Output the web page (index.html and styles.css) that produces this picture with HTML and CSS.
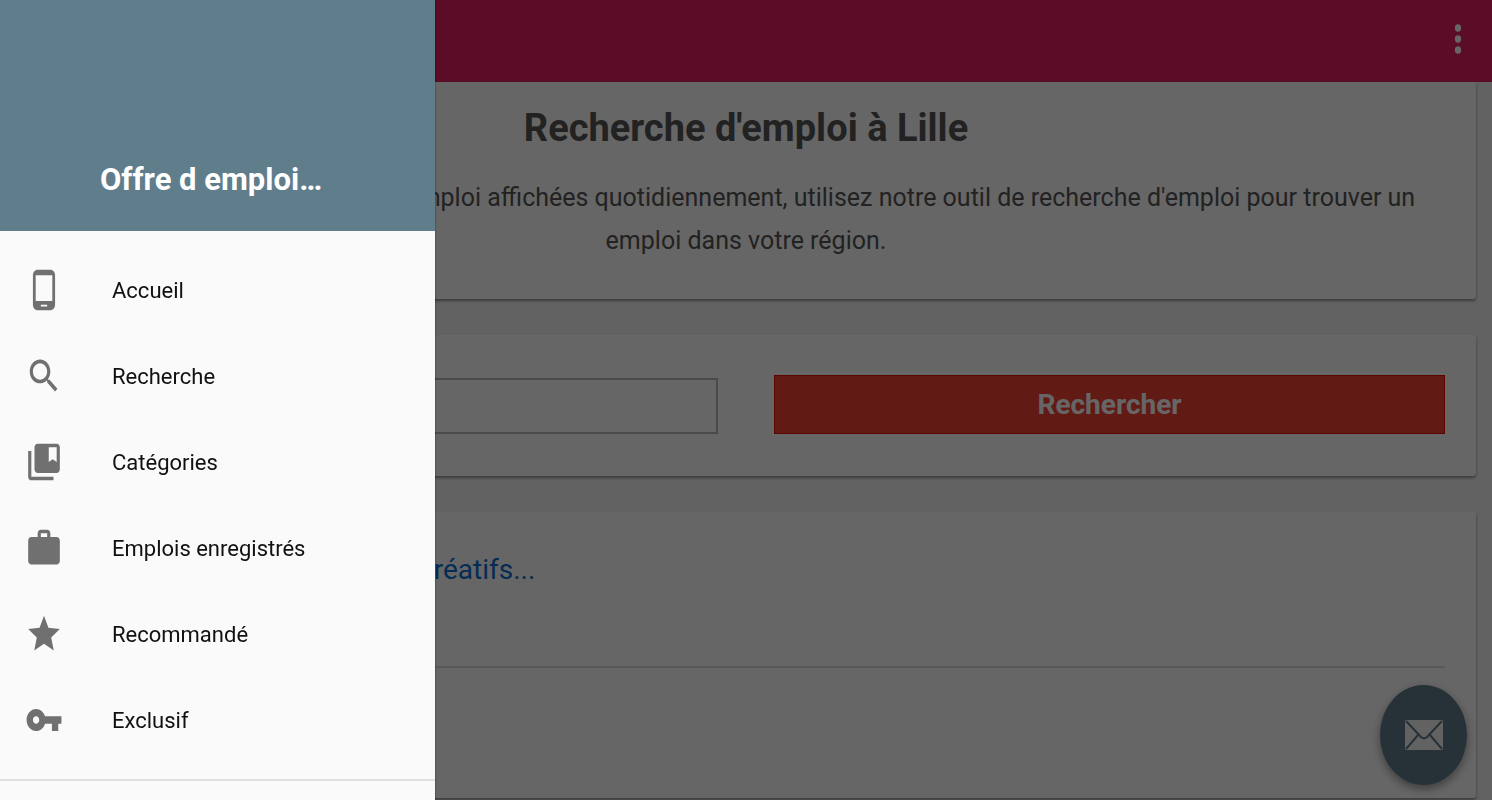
FILE: index.html
```
<!DOCTYPE html>
<html lang="fr">
<head>
    <meta charset="UTF-8">
    <meta name="viewport" content="width=device-width, initial-scale=1.0">
    <title>Offre d emploi</title>
    <link rel="stylesheet" href="styles.css">
</head>
<body>
    <header class="toolbar">
        <button class="more-btn" type="button" aria-label="Plus d'options">
            <svg class="icon" viewBox="0 0 24 24" preserveAspectRatio="none">
                <circle cx="12" cy="6" r="2"/>
                <circle cx="12" cy="12" r="2"/>
                <circle cx="12" cy="18" r="2"/>
            </svg>
        </button>
    </header>

    <main class="content">
        <section class="card intro">
            <h1>Recherche d'emploi à Lille</h1>
            <p>Avec des centaines d'offres d'emploi affichées quotidiennement, utilisez notre outil de recherche d'emploi pour trouver un emploi dans votre région.</p>
        </section>

        <form class="card search">
            <input class="search-input" type="text" aria-label="Recherche">
            <button class="search-btn" type="button">Rechercher</button>
        </form>

        <section class="card jobs">
            <a class="job-link" href="#">Emplois artistiques &amp; métiers créatifs...</a>
            <hr>
        </section>
    </main>

    <button class="fab" type="button" aria-label="Nous contacter">
        <svg class="mail" viewBox="0 0 38 30">
            <rect width="38" height="30" rx="1"/>
            <path d="M1 1l15 16q3 3 6 0L37 1M1 29l12-14M37 29L25 15"/>
        </svg>
    </button>

    <div class="overlay"></div>

    <aside class="drawer">
        <div class="drawer-header">Offre d emploi…</div>
        <nav class="menu">
            <a class="menu-item" href="#">
                <svg class="icon" viewBox="0 0 24 24" preserveAspectRatio="none"><path d="M16 1H8C6.340 1 5 2.340 5 4v16c0 1.660 1.340 3 3 3h8c1.660 0 3-1.340 3-3V4c0-1.660-1.340-3-3-3zm-2 20h-4v-1h4v1zm3.250-3H6.750V4h10.500v14z"/></svg>
                Accueil
            </a>
            <a class="menu-item" href="#">
                <svg class="icon" viewBox="0 0 24 24" preserveAspectRatio="none"><path d="M15.500 14h-.790l-.280-.270C15.410 12.590 16 11.110 16 9.500 16 5.910 13.090 3 9.500 3S3 5.910 3 9.500 5.910 16 9.500 16c1.610 0 3.090-.590 4.230-1.570l.270.280v.790l5 4.990L20.490 19l-4.990-5zm-6 0C7.010 14 5 11.990 5 9.500S7.010 5 9.500 5 14 7.010 14 9.500 11.990 14 9.500 14z"/></svg>
                Recherche
            </a>
            <a class="menu-item" href="#">
                <svg class="icon" viewBox="0 0 24 24" preserveAspectRatio="none"><path d="M4 6H2v14c0 1.100.9 2 2 2h14v-2H4V6z"/><path d="M20 2H8c-1.100 0-2 .9-2 2v12c0 1.100.9 2 2 2h12c1.100 0 2-.9 2-2V4c0-1.100-.9-2-2-2zm0 10l-2.500-1.500L15 12V4h5v8z"/></svg>
                Catégories
            </a>
            <a class="menu-item" href="#">
                <svg class="icon" viewBox="0 0 24 24" preserveAspectRatio="none"><path d="M20 6h-4V4c0-1.110-.890-2-2-2h-4c-1.110 0-2 .890-2 2v2H4c-1.110 0-1.990.890-1.990 2L2 19c0 1.110.890 2 2 2h16c1.110 0 2-.890 2-2V8c0-1.110-.890-2-2-2zm-6 0h-4V4h4v2z"/></svg>
                Emplois enregistrés
            </a>
            <a class="menu-item" href="#">
                <svg class="icon" viewBox="0 0 24 24" preserveAspectRatio="none"><path d="M12 17.270L18.180 21l-1.640-7.030L22 9.240l-7.190-.610L12 2 9.190 8.630 2 9.240l5.460 4.730L5.820 21z"/></svg>
                Recommandé
            </a>
            <a class="menu-item" href="#">
                <svg class="icon" viewBox="0 0 24 24" preserveAspectRatio="none"><path d="M12.650 10C11.830 7.670 9.610 6 7 6c-3.310 0-6 2.690-6 6s2.690 6 6 6c2.610 0 4.830-1.670 5.650-4H17v4h4v-4h2v-4H12.650zM7 14c-1.100 0-2-.9-2-2s.9-2 2-2 2 .9 2 2-.9 2-2 2z"/></svg>
                Exclusif
            </a>
        </nav>
    </aside>
</body>
</html>
```
FILE: styles.css
```
* {
    box-sizing: border-box;
}

body {
    margin: 0;
    height: 100vh;
    display: flex;
    flex-direction: column;
    overflow: hidden;
    background: #f5f5f5;
    font-family: Roboto, sans-serif;
}

button {
    border: none;
    padding: 0;
    font-family: inherit;
    cursor: pointer;
}

.icon {
    width: 38px;
    height: 44px;
    flex-shrink: 0;
    fill: #707070;
}

.toolbar {
    height: 82px;
    flex-shrink: 0;
    display: flex;
    align-items: center;
    justify-content: flex-end;
    padding: 0 15px 4px;
    background: #e41e5f;
}

.more-btn {
    display: flex;
    background: none;
}

.more-btn .icon {
    fill: #fff;
}

.content {
    flex: 1;
    min-height: 0;
    display: flex;
    flex-direction: column;
    gap: 36px;
    padding: 0 16px 2px;
}

.card {
    padding: 0 31px;
    background: #fff;
    border-radius: 0 0 3px 3px;
    box-shadow: 0 2px 3px rgba(0, 0, 0, 0.4);
}

.intro {
    padding-top: 16px;
    padding-bottom: 37px;
    text-align: center;
    color: #555;
}

.intro h1 {
    margin: 0 0 18px;
    font-size: 38px;
    line-height: 60px;
}

.intro p {
    margin: 0;
    font-size: 25px;
    line-height: 43px;
}

.search {
    display: grid;
    grid-template-columns: 1fr 1fr;
    gap: 56px;
    align-items: end;
    padding-top: 40px;
    padding-bottom: 42px;
}

.search-input {
    width: 100%;
    height: 56px;
    padding: 0 16px;
    border: 2px solid #b8b8b8;
    background: #fff;
    font-family: inherit;
    font-size: 25px;
}

.search-btn {
    height: 59px;
    border: 1px solid #e60a00;
    background: #f44336;
    color: #fff;
    font-size: 28px;
    font-weight: bold;
}

.jobs {
    flex: 1;
    padding-top: 28px;
}

.job-link {
    display: block;
    font-size: 28px;
    line-height: 60px;
    color: #0d6fd0;
    text-decoration: none;
}

.jobs hr {
    margin: 66px 0 0;
    border: none;
    border-top: 2px solid #ddd;
}

.fab {
    position: fixed;
    right: 25px;
    bottom: 15px;
    width: 87px;
    height: 100px;
    display: flex;
    align-items: center;
    justify-content: center;
    border-radius: 50%;
    background: #607d8b;
    box-shadow: 0 4px 10px rgba(0, 0, 0, 0.4);
}

.mail {
    width: 38px;
    height: 30px;
    fill: #f5f5f5;
}

.mail path {
    fill: none;
    stroke: #607d8b;
    stroke-width: 2;
}

.overlay {
    position: fixed;
    inset: 0;
    background: rgba(0, 0, 0, 0.6);
}

.drawer {
    position: fixed;
    top: 0;
    bottom: 0;
    left: 0;
    width: 435px;
    overflow: hidden;
    background: #fafafa;
    box-shadow: 0 0 2px rgba(0, 0, 0, 0.5);
}

.drawer-header {
    height: 231px;
    display: flex;
    align-items: flex-end;
    padding: 0 100px 31px;
    background: #607d8b;
    color: #fff;
    font-size: 31px;
    line-height: 40px;
    font-weight: bold;
    white-space: nowrap;
}

.menu {
    padding: 16px 0;
    border-bottom: 2px solid #e0e0e0;
}

.menu-item {
    height: 86px;
    display: flex;
    align-items: center;
    gap: 49px;
    padding: 0 25px;
    color: #111;
    font-size: 22px;
    text-decoration: none;
}
```
